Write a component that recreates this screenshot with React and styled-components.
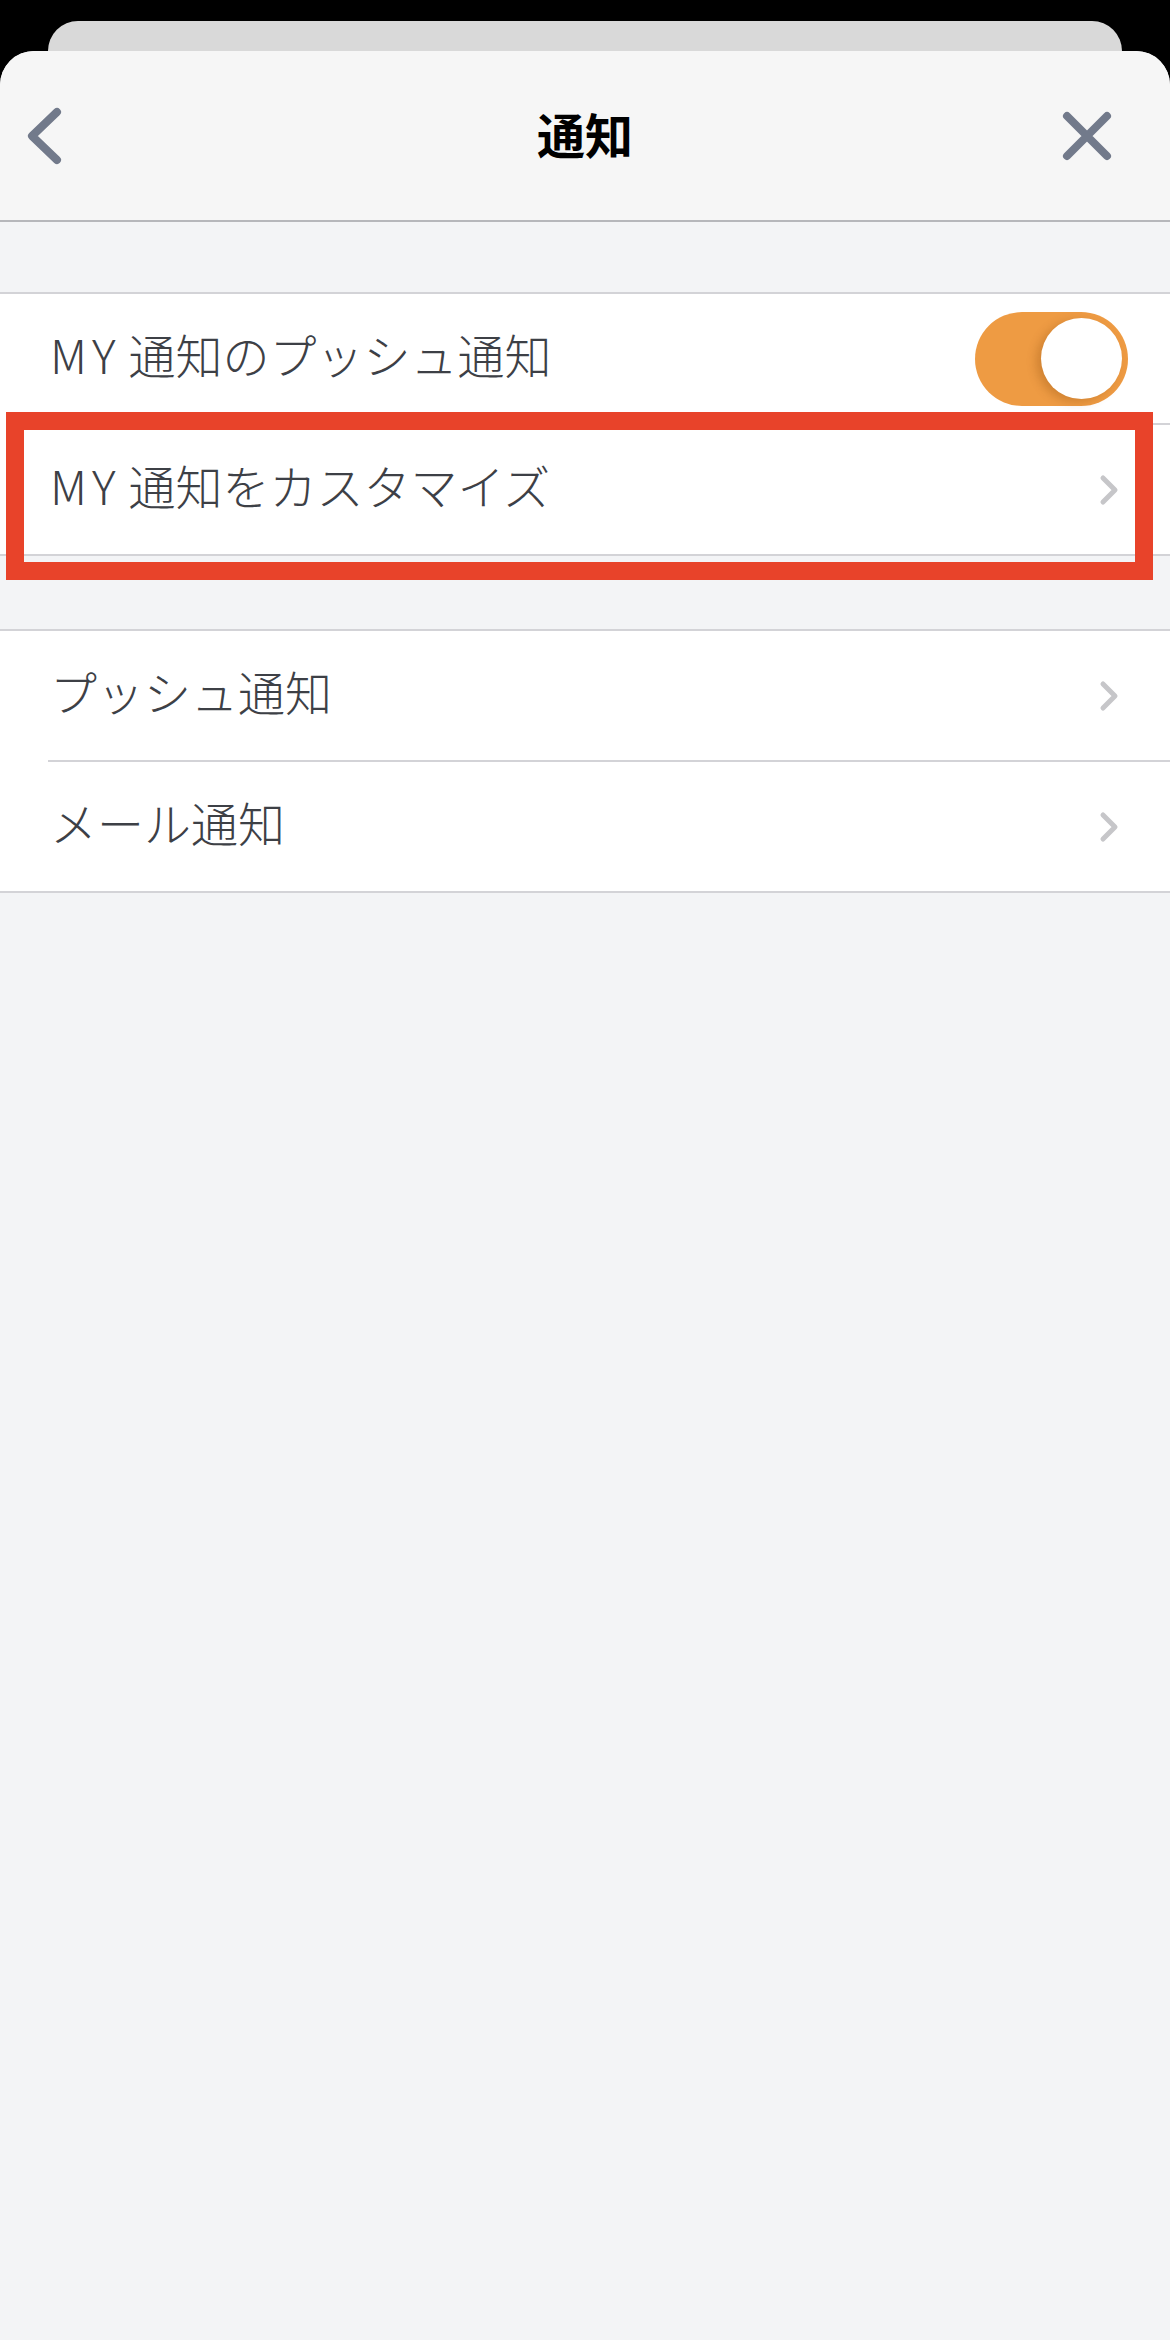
import React from 'react';
import styled, { createGlobalStyle } from 'styled-components';

const GlobalStyle = createGlobalStyle`
  html, body {
    margin: 0;
    padding: 0;
    background: #000;
  }
  body {
    font-family: "Noto Sans CJK JP", "Noto Sans", sans-serif;
    -webkit-font-smoothing: antialiased;
  }
`;

const Screen = styled.div`
  min-height: 2340px;
  display: flex;
  flex-direction: column;
  padding-top: 21px;
  box-sizing: border-box;
  background: #000;
`;

const BackCard = styled.div`
  height: 30px;
  margin: 0 48px;
  background: #d9d9d9;
  border-radius: 30px 30px 0 0;
`;

const Sheet = styled.div`
  flex: 1;
  display: flex;
  flex-direction: column;
  background: #f3f4f6;
  border-radius: 34px 34px 0 0;
  overflow: hidden;
`;

const Header = styled.header`
  height: 169px;
  display: grid;
  grid-template-columns: 1fr auto 1fr;
  align-items: center;
  background: #f6f6f6;
  border-bottom: 2px solid #b6b7bb;
`;

const IconButton = styled.button`
  display: flex;
  padding: 0;
  border: 0;
  background: none;
  justify-self: ${p => (p.$end ? 'end' : 'start')};
  margin: ${p => (p.$end ? '0 58px 0 0' : '0 0 0 23px')};
  color: #727a8b;
`;

const Title = styled.h1`
  margin: 0 0 6px;
  font-size: 48px;
  font-weight: 700;
  color: #000;
  letter-spacing: 0;
`;

const Gap = styled.div`
  height: ${p => p.$h}px;
`;

const Group = styled.section`
  background: #fff;
  border-top: 2px solid #d3d3d7;
  border-bottom: 2px solid #d3d3d7;
`;

const Row = styled.div`
  position: relative;
  padding-left: 48px;
`;

const RowInner = styled.div`
  height: 129px;
  display: flex;
  align-items: center;
  justify-content: space-between;
  padding-right: ${p => (p.$toggle ? 42 : 51)}px;
  border-bottom: ${p => (p.$last ? 'none' : '2px solid #d3d3d7')};
`;

const Label = styled.span`
  font-size: 47px;
  font-weight: 300;
  color: #3d4046;
  padding: 0 0 10px 2px;
`;

const Latin = styled.span`
  letter-spacing: 5px;
  margin-right: 8px;
`;

const Switch = styled.div`
  width: 153px;
  height: 94px;
  border-radius: 47px;
  background: #ee9b43;
  display: flex;
  align-items: center;
  justify-content: flex-end;
  padding-right: 6px;
  box-sizing: border-box;
`;

const Knob = styled.div`
  width: 81px;
  height: 81px;
  border-radius: 50%;
  background: #fff;
  box-shadow: -5px 3px 10px rgba(120, 60, 0, 0.25);
`;

const Highlight = styled.div`
  position: absolute;
  top: -13px;
  bottom: -26px;
  left: 6px;
  right: 17px;
  border: 18px solid #e8432a;
  pointer-events: none;
  z-index: 2;
`;

const BackIcon = () => (
  <svg width="40" height="64" viewBox="0 0 40 64" fill="none">
    <path d="M34 8 L9 32 L34 56" stroke="currentColor" strokeWidth="8" strokeLinecap="round" strokeLinejoin="round" />
  </svg>
);

const CloseIcon = () => (
  <svg width="50" height="50" viewBox="0 0 50 50" fill="none">
    <path d="M5 5 L45 45 M45 5 L5 45" stroke="currentColor" strokeWidth="8" strokeLinecap="round" />
  </svg>
);

const Chevron = () => (
  <svg width="20" height="32" viewBox="0 0 20 32" fill="none">
    <path d="M4 4 L16 16 L4 28" stroke="#c6c6c9" strokeWidth="5" strokeLinecap="round" strokeLinejoin="round" />
  </svg>
);

const SettingRow = ({ prefix, label, toggle, last, highlighted }) => (
  <Row>
    <RowInner $toggle={toggle} $last={last}>
      <Label>
        {prefix && <Latin>{prefix}</Latin>}
        {label}
      </Label>
      {toggle ? (
        <Switch>
          <Knob />
        </Switch>
      ) : (
        <Chevron />
      )}
    </RowInner>
    {highlighted && <Highlight />}
  </Row>
);

export default function App() {
  return (
    <>
      <GlobalStyle />
      <Screen>
        <BackCard />
        <Sheet>
          <Header>
            <IconButton aria-label="戻る">
              <BackIcon />
            </IconButton>
            <Title>通知</Title>
            <IconButton $end aria-label="閉じる">
              <CloseIcon />
            </IconButton>
          </Header>
          <Gap $h={70} />
          <Group>
            <SettingRow prefix="MY" label="通知のプッシュ通知" toggle />
            <SettingRow prefix="MY" label="通知をカスタマイズ" last highlighted />
          </Group>
          <Gap $h={73} />
          <Group>
            <SettingRow label="プッシュ通知" />
            <SettingRow label="メール通知" last />
          </Group>
        </Sheet>
      </Screen>
    </>
  );
}
